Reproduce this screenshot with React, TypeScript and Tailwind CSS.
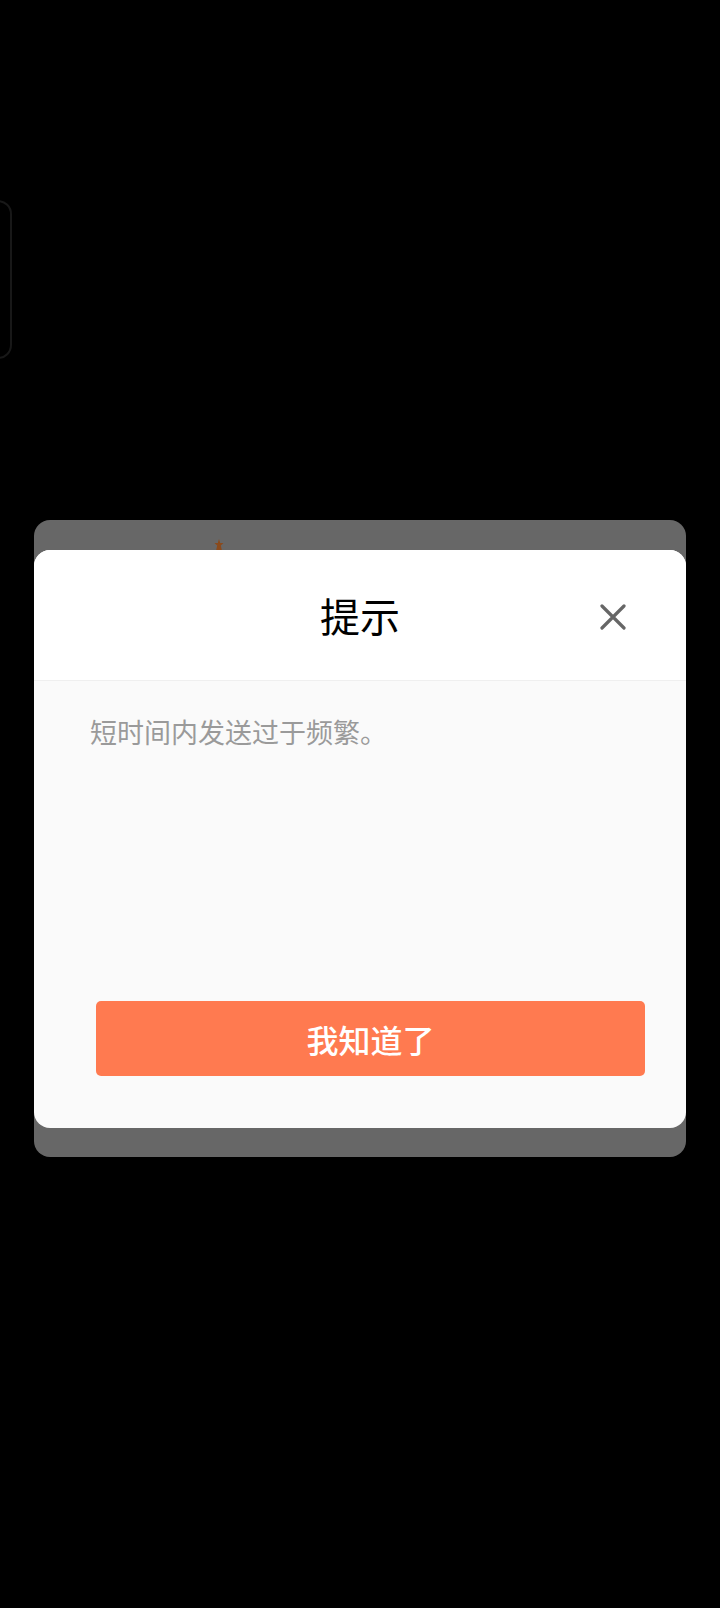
import React from 'react';

const CloseIcon = () => (
  <svg width="26" height="26" viewBox="0 0 26 26" fill="none">
    <path d="M2 2L24 24M24 2L2 24" stroke="#666666" strokeWidth="3.2" strokeLinecap="round" />
  </svg>
);

const App: React.FC = () => {
  return (
    <div
      className="w-[720px] h-[1608px] bg-black overflow-hidden flex flex-col"
      style={{ fontFamily: '"Noto Sans CJK SC", "Noto Sans", sans-serif' }}
    >
      {/* background card peeking from the left */}
      <div className="mt-[200px] ml-[-20px] w-[32px] h-[159px] rounded-[14px] border-2 border-[#181818]"></div>

      {/* dimmed sheet behind the dialog */}
      <div className="relative mt-[161px] ml-[34px] w-[652px] bg-[#676767] rounded-[16px] pt-[30px] pb-[29px]">
        <div className="absolute left-[180px] top-[19px] w-[10px] h-[12px]">
          <svg width="10" height="12" viewBox="0 0 10 12">
            <path d="M5 0L6.2 4H9.5L6.8 6.5L8 12H2L3.2 6.5L0.5 4H3.8Z" fill="#8a4a1c" />
          </svg>
        </div>

        <div className="relative w-full h-[578px] rounded-[16px] overflow-hidden flex flex-col bg-[#fafafa]">
          {/* header */}
          <div className="relative h-[131px] bg-white border-b border-[#efefef] flex items-center justify-center shrink-0">
            <span className="text-[40px] leading-none text-black">提示</span>
            <button className="absolute right-[60px] top-[54px] w-[26px] h-[26px] flex items-center justify-center">
              <CloseIcon />
            </button>
          </div>

          {/* body */}
          <div className="flex-1 flex flex-col">
            <p className="pt-[31px] pl-[56px] text-[27px] leading-[40px] text-[#9a9a9a]">短时间内发送过于频繁。</p>
            <div className="mt-auto mb-[52px] ml-[62px] mr-[41px]">
              <button className="w-full h-[75px] rounded-[5px] bg-[#ff7a50] text-white text-[32px] font-medium flex items-center justify-center">
                我知道了
              </button>
            </div>
          </div>
        </div>
      </div>
    </div>
  );
};

export default App;
